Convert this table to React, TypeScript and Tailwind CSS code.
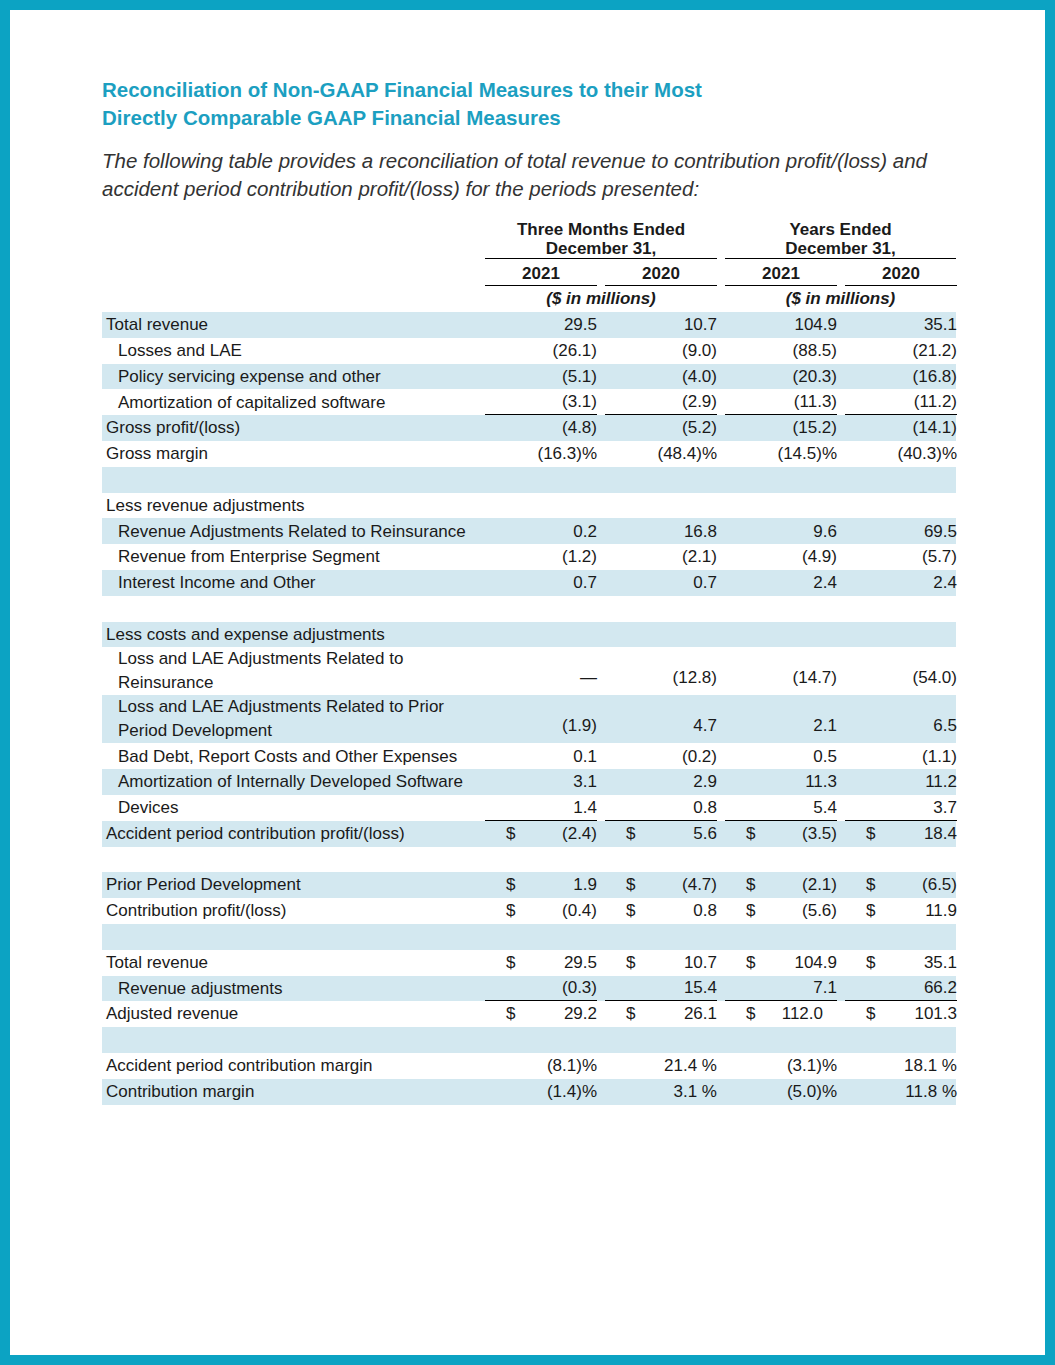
import React from "react";

type Row = {
  label?: string;
  lines?: [string, string];
  indent?: boolean;
  vals?: [string, string, string, string];
  dollar?: boolean;
  underline?: boolean;
};

const rows: Row[] = [
  { label: "Total revenue", vals: ["29.5", "10.7", "104.9", "35.1"] },
  { label: "Losses and LAE", indent: true, vals: ["(26.1)", "(9.0)", "(88.5)", "(21.2)"] },
  { label: "Policy servicing expense and other", indent: true, vals: ["(5.1)", "(4.0)", "(20.3)", "(16.8)"] },
  { label: "Amortization of capitalized software", indent: true, vals: ["(3.1)", "(2.9)", "(11.3)", "(11.2)"], underline: true },
  { label: "Gross profit/(loss)", vals: ["(4.8)", "(5.2)", "(15.2)", "(14.1)"] },
  { label: "Gross margin", vals: ["(16.3)%", "(48.4)%", "(14.5)%", "(40.3)%"] },
  {},
  { label: "Less revenue adjustments" },
  { label: "Revenue Adjustments Related to Reinsurance", indent: true, vals: ["0.2", "16.8", "9.6", "69.5"] },
  { label: "Revenue from Enterprise Segment", indent: true, vals: ["(1.2)", "(2.1)", "(4.9)", "(5.7)"] },
  { label: "Interest Income and Other", indent: true, vals: ["0.7", "0.7", "2.4", "2.4"] },
  {},
  { label: "Less costs and expense adjustments" },
  { lines: ["Loss and LAE Adjustments Related to", "Reinsurance"], indent: true, vals: ["—", "(12.8)", "(14.7)", "(54.0)"] },
  { lines: ["Loss and LAE Adjustments Related to Prior", "Period Development"], indent: true, vals: ["(1.9)", "4.7", "2.1", "6.5"] },
  { label: "Bad Debt, Report Costs and Other Expenses", indent: true, vals: ["0.1", "(0.2)", "0.5", "(1.1)"] },
  { label: "Amortization of Internally Developed Software", indent: true, vals: ["3.1", "2.9", "11.3", "11.2"] },
  { label: "Devices", indent: true, vals: ["1.4", "0.8", "5.4", "3.7"], underline: true },
  { label: "Accident period contribution profit/(loss)", vals: ["(2.4)", "5.6", "(3.5)", "18.4"], dollar: true },
  {},
  { label: "Prior Period Development", vals: ["1.9", "(4.7)", "(2.1)", "(6.5)"], dollar: true },
  { label: "Contribution profit/(loss)", vals: ["(0.4)", "0.8", "(5.6)", "11.9"], dollar: true },
  {},
  { label: "Total revenue", vals: ["29.5", "10.7", "104.9", "35.1"], dollar: true },
  { label: "Revenue adjustments", indent: true, vals: ["(0.3)", "15.4", "7.1", "66.2"], underline: true },
  { label: "Adjusted revenue", vals: ["29.2", "26.1", "112.0", "101.3"], dollar: true },
  {},
  { label: "Accident period contribution margin", vals: ["(8.1)%", "21.4 %", "(3.1)%", "18.1 %"] },
  { label: "Contribution margin", vals: ["(1.4)%", "3.1 %", "(5.0)%", "11.8 %"] },
];

function TableRow({ row, shaded }: { row: Row; shaded: boolean }) {
  const two = !!row.lines;
  return (
    <div
      className={`flex ${two ? "h-[48px]" : "h-[25.8px]"} ${shaded ? "bg-[#d3e8f0]" : ""}`}
    >
      <div
        className={`w-[375px] shrink-0 flex ${two ? "flex-col justify-center leading-[24px]" : "items-center"} ${row.indent ? "pl-[16px]" : "pl-[4px]"}`}
      >
        {two ? (
          <>
            <span>{row.lines![0]}</span>
            <span>{row.lines![1]}</span>
          </>
        ) : (
          <span>{row.label}</span>
        )}
      </div>
      {row.vals &&
        row.vals.map((v, i) => (
          <div
            key={i}
            className={`w-[112px] shrink-0 ml-2 flex justify-between whitespace-pre ${two ? "items-end pb-[5px]" : "items-center"} ${row.underline ? "border-b border-black" : ""}`}
          >
            <span className="pl-[21px]">{row.dollar ? "$" : ""}</span>
            <span className={v === "112.0" ? "pr-[14px]" : ""}>{v}</span>
          </div>
        ))}
    </div>
  );
}

export default function App() {
  return (
    <div className="w-[1055px] h-[1365px] border-[10px] border-[#0ca3c3] bg-white font-['Liberation_Sans',Arial,sans-serif] text-[#1a1a1a]">
      <div className="pl-[92px] pt-[66px] w-[947px]">
        <h1 className="text-[20.5px] leading-[28px] font-bold text-[#1c9fc1]">
          Reconciliation of Non-GAAP Financial Measures to their Most
          <br />
          Directly Comparable GAAP Financial Measures
        </h1>
        <p className="mt-[15px] text-[20.5px] leading-[28px] italic text-[#333333]">
          The following table provides a reconciliation of total revenue to contribution profit/(loss) and
          <br />
          accident period contribution profit/(loss) for the periods presented:
        </p>

        <div className="mt-[17px] w-[854px] text-[17px]">
          {/* Header */}
          <div className="flex font-bold text-[17px] leading-[19px]">
            <div className="w-[375px] shrink-0" />
            <div className="w-[232px] shrink-0 ml-2 border-b border-black text-center">
              Three Months Ended
              <br />
              December 31,
            </div>
            <div className="w-[231px] shrink-0 ml-2 border-b border-black text-center">
              Years Ended
              <br />
              December 31,
            </div>
          </div>
          <div className="flex font-bold leading-[20px]">
            <div className="w-[375px] shrink-0" />
            {["2021", "2020", "2021", "2020"].map((y, i) => (
              <div key={i} className="w-[112px] shrink-0 ml-2 pt-[5px] pb-[1px] border-b border-black text-center">
                {y}
              </div>
            ))}
          </div>
          <div className="flex h-[26px] items-center font-bold italic">
            <div className="w-[375px] shrink-0" />
            <div className="w-[232px] shrink-0 ml-2 text-center">($ in millions)</div>
            <div className="w-[231px] shrink-0 ml-2 text-center">($ in millions)</div>
          </div>

          {rows.map((r, i) => (
            <TableRow key={i} row={r} shaded={i % 2 === 0} />
          ))}
        </div>
      </div>
    </div>
  );
}
